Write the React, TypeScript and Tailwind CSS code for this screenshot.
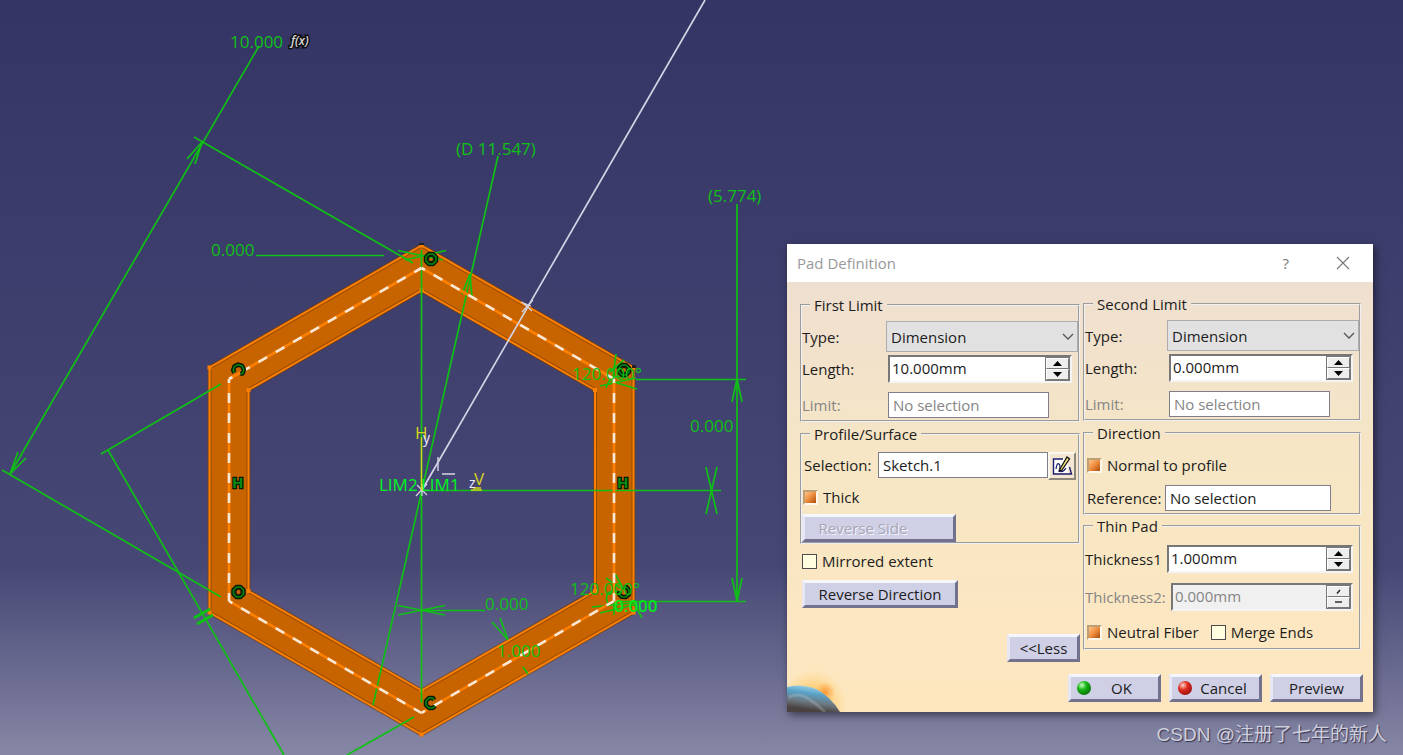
import { useState } from 'react';
import type { ReactNode } from 'react';
import clsx from 'clsx';

const OUTER = '421.5,245.5 633.5,367.5 633.5,612.5 421.5,734.5 209.5,612.5 209.5,367.5';
const INNER = '421.5,290.5 595,390 595,591 421.5,690.5 248.5,591 248.5,390';
const PROFILE = [
  [421.5, 268, 614, 379],
  [614, 379, 614, 601],
  [421.5, 713, 614, 601],
  [229, 601, 421.5, 713],
  [229, 379, 229, 601],
  [229, 379, 421.5, 268],
];
const CORNERS = `${OUTER} ${INNER}`.split(' ').map((p) => p.split(',').map(Number));

// dimension, extension and leader lines
const DIMENSION_LINES = [
  'M259 46L10 474',
  'M194 137L413 263',
  'M202 142L187 159M202 142L195 164',
  'M10 474L18 452M10 474L26 458',
  'M2 470L221 597',
  'M101 454L221 384',
  'M108 450L284 755',
  'M347 755L414 717',
  'M256 255.5H384',
  'M421.5 250V703',
  'M498 156L373 705',
  'M470 274L462 294M470 274L472 298',
  'M398 250.5L443 260M405 260L446 250.5',
  'M398 605.5L445 615M398 615L445 605.5M421 610.5H485',
  'M737 204V601',
  'M737 379L732 402M737 379L742 402M737 601L732 578M737 601L742 578',
  'M636 379.5H746M620 601.5H746',
  'M421 490.5H721',
  'M706 467L717 514M717 467L706 514',
  'M508 640L492 622M508 640L500 618M523 667L528 674',
  'M606 388Q611 372 626 378M616 354L612 384M624 360L610 372M614 382L637 389M600 386L636 378',
  'M608 604Q602 588 622 592M615 574L624 590M606 578L620 588M592 607L634 603M600 613L634 605M634 603L642 618M614 600V615',
];

function Constraint({ x, y, gap = false, turn = 0 }: { x: number; y: number; gap?: boolean; turn?: number }) {
  const ring = 'M-2-5H2L5-2V2L2 5H-2L-5 2V-2Z';
  const open = 'M3-3L2-5H-2L-5-2V2L-2 5H2L4 3';
  return (
    <g transform={`translate(${x} ${y}) rotate(${turn})`} fill="none" strokeLinejoin="round">
      <path d={gap ? open : ring} stroke="#031a03" strokeWidth="4.5" />
      <path d={gap ? open : ring} stroke="#078a12" strokeWidth="1.5" />
      {!gap && <circle r="2.6" stroke="#031a03" strokeWidth="1" />}
    </g>
  );
}

function Sketch() {
  return (
    <svg
      viewBox="0 0 1403 755"
      preserveAspectRatio="xMinYMin meet"
      className="absolute inset-0 h-full w-full font-['Open_Sans','Noto_Sans',sans-serif]"
      aria-hidden="true"
    >
      <path d={`M${OUTER}ZM${INNER}Z`} fill="#c86400" fillRule="evenodd" />
      <g fill="none" strokeLinejoin="round">
        <polygon points={OUTER} stroke="#7a3c00" strokeWidth="4" strokeOpacity="0.6" />
        <polygon points={INNER} stroke="#7a3c00" strokeWidth="4" strokeOpacity="0.6" />
        <polygon points={OUTER} stroke="#ff8000" strokeWidth="2" />
        <polygon points={INNER} stroke="#ff8000" strokeWidth="2" />
      </g>
      {CORNERS.map(([x, y]) => (
        <rect key={`${x}-${y}`} x={x - 2} y={y - 2} width="4" height="4" fill="#ff8000" />
      ))}
      <rect x="419" y="243" width="5" height="2" fill="#222" />
      <rect x="632" y="365" width="4" height="3" fill="#222" />

      <g stroke="#0fc015" strokeWidth="1.7" fill="none">
        {DIMENSION_LINES.map((d) => (
          <path key={d} d={d} />
        ))}
        <path d="M194 618L210 609M197 624L213 615" strokeWidth="3" />
      </g>

      {PROFILE.map(([x1, y1, x2, y2]) => (
        <g key={`${x1}-${y1}-${x2}`} strokeWidth="2.6">
          <line x1={x1} y1={y1} x2={x2} y2={y2} stroke="#ff8000" />
          <line x1={x1} y1={y1} x2={x2} y2={y2} stroke="#f8e8d8" strokeDasharray="10 10" strokeDashoffset="6" />
        </g>
      ))}

      <g stroke="#d4d4e4" strokeWidth="1.7" fill="none">
        <path d="M422 490L705 0" />
        <path d="M522 302L532 311M533 300L522 312M521 302L531 306" strokeWidth="1.2" />
        <path d="M438 457V471M442 474H455" strokeWidth="1.4" />
        <path d="M416 496L427 484M417 485L427 495M422 484V496" strokeWidth="1.2" />
      </g>

      <Constraint x={431} y={259} />
      <Constraint x={238.5} y={370} gap turn={110} />
      <Constraint x={624} y={370} />
      <Constraint x={238.5} y={592} />
      <Constraint x={624} y={592} gap turn={230} />
      <Constraint x={431} y={703} gap />

      <g fontSize="17" fill="#0fc015">
        <text x="230" y="48">10.000</text>
        <text x="211" y="256">0.000</text>
        <text x="456" y="155">(D 11.547)</text>
        <text x="708" y="202">(5.774)</text>
        <text x="690" y="432">0.000</text>
        <text x="485" y="610">0.000</text>
        <text x="497" y="657">1.000</text>
        <text x="572" y="380">120.000°</text>
        <text x="570" y="595">120.000°</text>
        <text x="614" y="612" fill="#00e81a" fontWeight="600">0.000</text>
      </g>
      <g fontSize="17" fill="#00f520">
        <text x="379" y="491">LIM2</text>
        <text x="421" y="491">LIM1</text>
      </g>

      <g fontSize="15" fontWeight="700" fill="#078a12" stroke="#031a03" strokeWidth="2.5" paintOrder="stroke">
        <text x="232" y="488">H</text>
        <text x="617" y="488">H</text>
      </g>
      <text x="291" y="45" fontSize="12" fontStyle="italic" fontWeight="600" fill="#d8d8d8" stroke="#111" strokeWidth="3" paintOrder="stroke">
        f(x)
      </text>

      {/* sketch axes */}
      <path d="M421.500 437V490M471 490H482M473 488H481" stroke="#d6d21c" strokeWidth="1.4" fill="none" />
      <g fontSize="17" fill="#d6d21c">
        <text x="415" y="439">H</text>
        <text x="474" y="485">V</text>
      </g>
      <g fontSize="14" fill="#eeeeff">
        <text x="423" y="443">y</text>
        <text x="469" y="488">z</text>
      </g>
    </svg>
  );
}

function Group({ title, className, children }: { title: string; className?: string; children: ReactNode }) {
  return (
    <fieldset className={clsx('min-w-0 border-2 border-[#f0f0f0] [border-style:groove]', className)}>
      <legend className="ml-2 px-1">{title}</legend>
      {children}
    </fieldset>
  );
}

function SelectBox({ id }: { id: string }) {
  return (
    <div className="relative">
      <select
        id={id}
        defaultValue="Dimension"
        className="h-[31px] w-full appearance-none border border-[#adadad] bg-[#e1e1e1] px-1"
      >
        <option>Dimension</option>
        <option>Up to next</option>
        <option>Up to last</option>
        <option>Up to plane</option>
        <option>Up to surface</option>
      </select>
      <svg viewBox="0 0 12 8" className="pointer-events-none absolute top-3 right-1 h-2 w-3" fill="none" stroke="#555" strokeWidth="1.3">
        <path d="M1 1L6 6L11 1" />
      </svg>
    </div>
  );
}

function SpinBox({ id, value, disabled, className }: { id: string; value: string; disabled?: boolean; className?: string }) {
  const [text, setText] = useState(value);
  const button =
    'flex flex-1 items-center justify-center border border-t-white border-l-white border-r-[#777] border-b-[#777] bg-[#eeeeee]';

  const step = (delta: number) => setText((t) => `${(parseFloat(t) + delta).toFixed(3)}mm`);

  return (
    <div
      className={clsx(
        'flex h-7 min-w-0 border-2 border-t-[#777] border-r-[#f4f4f4] border-b-[#f4f4f4] border-l-[#777]',
        disabled ? 'bg-[#f0f0f0]' : 'bg-white',
        className,
      )}
    >
      <input
        id={id}
        value={text}
        disabled={disabled}
        onChange={(e) => setText(e.target.value)}
        className="h-[22px] min-w-0 flex-1 bg-transparent px-0.5 outline-none disabled:text-[#858585]"
      />
      <div className="flex w-[25px] shrink-0 flex-col border border-[#777] bg-[#777]">
        <button type="button" aria-label="Increase" disabled={disabled} onClick={() => step(1)} className={button}>
          <svg viewBox="0 0 9 5" className="h-[5px] w-[9px]">
            {disabled ? <path d="M3 4.500L6 1" stroke="#222" strokeWidth="1.4" /> : <path d="M0 5L4.500 0L9 5Z" />}
          </svg>
        </button>
        <button type="button" aria-label="Decrease" disabled={disabled} onClick={() => step(-1)} className={button}>
          <svg viewBox="0 0 9 5" className="h-[5px] w-[9px]">
            {disabled ? <path d="M1 2H8" stroke="#222" strokeWidth="1.4" /> : <path d="M0 0L4.500 5L9 0Z" />}
          </svg>
        </button>
      </div>
    </div>
  );
}

function TextBox({ id, value, disabled, className }: { id: string; value: string; disabled?: boolean; className?: string }) {
  return (
    <input
      id={id}
      defaultValue={value}
      disabled={disabled}
      className={clsx('h-[26px] border border-[#7f7f8c] bg-white px-1 disabled:text-[#858585]', className)}
    />
  );
}

function CheckBox({ label, checked = false }: { label: string; checked?: boolean }) {
  return (
    <label className="flex h-5 items-center gap-[5px]">
      <input
        type="checkbox"
        defaultChecked={checked}
        className="size-[15px] shrink-0 appearance-none border border-[#4c4c4c] bg-[#ffffe0] checked:border-2 checked:border-t-[#bd9f76] checked:border-r-[#fff8ea] checked:border-b-[#fff8ea] checked:border-l-[#bd9f76] checked:bg-linear-to-br checked:from-[#ffc487] checked:via-[#ee8b3a] checked:to-[#a84e0c]"
      />
      {label}
    </label>
  );
}

function PushButton({ children, disabled, className }: { children: ReactNode; disabled?: boolean; className?: string }) {
  return (
    <button
      type="button"
      disabled={disabled}
      className={clsx(
        'flex h-7 items-center justify-center border-[3px] border-t-[#f6f6fd] border-r-[#72728f] border-b-[#72728f] border-l-[#e6e6f4] bg-[#cfcfe6] disabled:text-[#a6a6b4] disabled:[text-shadow:1px_1px_0_#f4f4ff]',
        className,
      )}
    >
      {children}
    </button>
  );
}

function Led({ color }: { color: 'green' | 'red' }) {
  return (
    <span
      className={clsx(
        'size-[14px] shrink-0 rounded-full',
        color === 'green'
          ? 'bg-[radial-gradient(circle_at_35%_30%,#c8ffc0_0%,#14b414_35%,#045004_100%)]'
          : 'bg-[radial-gradient(circle_at_35%_30%,#ffd8d0_0%,#e02c20_35%,#780404_100%)]',
      )}
    />
  );
}

function LimitFields({ id, length }: { id: string; length: string }) {
  return (
    <>
      <label htmlFor={`${id}-type`}>Type:</label>
      <SelectBox id={`${id}-type`} />
      <label htmlFor={`${id}-length`} className="mt-[3px]">Length:</label>
      <SpinBox id={`${id}-length`} value={length} className="mt-[3px] mr-1.5 ml-0.5" />
      <label htmlFor={`${id}-limit`} className="mt-[9px] text-[#858585]">Limit:</label>
      <TextBox id={`${id}-limit`} value="No selection" disabled className="mt-[9px] ml-0.5 w-[161px]" />
    </>
  );
}

function PadDialog() {
  return (
    <section
      role="dialog"
      aria-labelledby="pad-title"
      className="absolute top-[244px] right-[30px] w-[586px] shadow-[2px_3px_8px_rgba(0,0,0,0.5)]"
    >
      <header className="flex h-[38px] items-center bg-white pr-[23px] pl-2.5">
        <h1 id="pad-title" className="flex-1 text-[15px] text-[#999]">Pad Definition</h1>
        <button type="button" aria-label="Help" className="mr-[47px] text-[#777]">?</button>
        <button type="button" aria-label="Close">
          <svg viewBox="0 0 14 14" className="size-[14px]" stroke="#777" strokeWidth="1.1">
            <path d="M1 1L13 13M13 1L1 13" />
          </svg>
        </button>
      </header>

      <form
        onSubmit={(e) => e.preventDefault()}
        className="relative bg-linear-to-b from-[#efdfd0] via-[#f6e6c5] via-40% to-[#fee7bf] pb-2.5"
      >
        <svg viewBox="0 0 60 42" className="absolute bottom-0 left-0 h-[42px] w-[60px]" aria-hidden="true">
          <defs>
            <radialGradient id="glow">
              <stop offset="0.3" stopColor="#ffc45e" />
              <stop offset="1" stopColor="#ffd27a" stopOpacity="0" />
            </radialGradient>
            <radialGradient id="flare">
              <stop offset="0" stopColor="#ff9a3a" />
              <stop offset="1" stopColor="#ffa040" stopOpacity="0" />
            </radialGradient>
            <linearGradient id="globe" x1="0.6" y1="0" x2="0.35" y2="0.9">
              <stop offset="0" stopColor="#a8dff4" />
              <stop offset="0.35" stopColor="#5aa2c8" />
              <stop offset="0.7" stopColor="#6d7880" />
              <stop offset="1" stopColor="#4a4240" />
            </linearGradient>
          </defs>
          <ellipse cx="26" cy="34" rx="34" ry="34" fill="url(#glow)" />
          <circle cx="38" cy="22" r="10" fill="url(#flare)" />
          <path d="M0 17Q14 13 29 19Q43 26 53 42H0Z" fill="url(#globe)" />
          <path d="M2 27Q12 22 22 29T38 42" stroke="#c4d2d6" strokeWidth="3" strokeOpacity="0.25" fill="none" />
        </svg>

        <div className="flex items-start gap-[3px] pr-3 pl-[13px]">
          <div className="flex w-[280px] flex-col pt-[13px]">
            <Group title="First Limit">
              <div className="grid grid-cols-[84px_minmax(0,1fr)] items-center pt-1.5 pb-0.5">
                <LimitFields id="first" length="10.000mm" />
              </div>
            </Group>
            <Group title="Profile/Surface" className="mt-0.5">
              <div className="flex items-start pt-2 pr-0.5">
                <label htmlFor="selection" className="mt-[3px] w-[76px] shrink-0 pl-0.5">Selection:</label>
                <TextBox id="selection" value="Sketch.1" className="min-w-0 flex-1" />
                <button
                  type="button"
                  aria-label="Edit sketch"
                  className="flex size-7 items-center justify-center border-2 border-t-[#fbf6ee] border-r-[#8d867c] border-b-[#8d867c] border-l-[#fbf6ee] bg-[#f3e7d4]"
                >
                  <svg viewBox="0 0 22 22" className="size-[22px]" fill="none">
                    <path d="M3 4H17V18H3Z" fill="#fff" />
                    <path d="M12 4H2.500V19H20.500L18.500 12" stroke="#1c1c6c" strokeWidth="1.4" />
                    <path d="M5 14Q6 7 8 9T8 16Q12 18 15 13" stroke="#1c1c6c" strokeWidth="1.2" />
                    <path d="M9 14L16 2L18.500 4L11 15L8.500 16Z" fill="#f4e080" stroke="#111" strokeWidth="1.3" />
                  </svg>
                </button>
              </div>
              <div className="mt-[7px] pl-px">
                <CheckBox label="Thick" checked />
              </div>
              <PushButton disabled className="mt-[7px] w-[154px] pr-8">Reverse Side</PushButton>
            </Group>
            <div className="mt-[7px] pl-0.5">
              <CheckBox label="Mirrored extent" />
              <PushButton className="mt-[9px] w-[156px]">Reverse Direction</PushButton>
            </div>
            <PushButton className="mt-[26px] w-[73px] self-end">&lt;&lt;Less</PushButton>
          </div>

          <div className="flex min-w-0 flex-1 flex-col pt-3">
            <Group title="Second Limit">
              <div className="grid grid-cols-[82px_minmax(0,1fr)] items-center pt-1.5 pb-0.5">
                <LimitFields id="second" length="0.000mm" />
              </div>
            </Group>
            <Group title="Direction" className="mt-0.5">
              <div className="pt-3 pl-0.5">
                <CheckBox label="Normal to profile" checked />
              </div>
              <div className="mt-2.5 flex items-center pr-7 pb-0.5 pl-0.5">
                <label htmlFor="reference" className="w-[78px] shrink-0">Reference:</label>
                <TextBox id="reference" value="No selection" className="min-w-0 flex-1" />
              </div>
            </Group>
            <Group title="Thin Pad" className="mt-px">
              <div className="flex items-center pt-[9px] pr-1.5">
                <label htmlFor="thickness1" className="w-[82px] shrink-0">Thickness1</label>
                <SpinBox id="thickness1" value="1.000mm" className="flex-1" />
              </div>
              <div className="mt-2.5 flex items-center pr-1.5">
                <label htmlFor="thickness2" className="w-[86px] shrink-0 text-[#858585]">Thickness2:</label>
                <SpinBox id="thickness2" value="0.000mm" disabled className="flex-1" />
              </div>
              <div className="mt-[11px] flex gap-3 pb-1.5 pl-0.5">
                <CheckBox label="Neutral Fiber" checked />
                <CheckBox label="Merge Ends" />
              </div>
            </Group>
          </div>
        </div>

        <div className="mt-3 flex justify-end gap-2 pr-2.5">
          <PushButton className="w-[93px] gap-5 pr-5">
            <Led color="green" />
            OK
          </PushButton>
          <PushButton className="w-[93px] gap-2 pr-1.5">
            <Led color="red" />
            Cancel
          </PushButton>
          <PushButton className="w-[93px]">Preview</PushButton>
        </div>
      </form>
    </section>
  );
}

function App() {
  return (
    <main className="relative h-screen min-h-[755px] overflow-hidden bg-linear-to-b from-[#353565] via-[#474775] via-75% to-[#8787a5] font-['Open_Sans','Noto_Sans',sans-serif] text-[15px] leading-5 text-[#1c1c1c]">
      <Sketch />
      <PadDialog />
      <p className="absolute right-4 bottom-2 font-['Liberation_Sans','Noto_Sans_CJK_SC',sans-serif] text-[19px] leading-6 text-[#cfcfdc] [text-shadow:1px_1px_1px_#333350]">
        CSDN @注册了七年的新人
      </p>
    </main>
  );
}

export default App;
